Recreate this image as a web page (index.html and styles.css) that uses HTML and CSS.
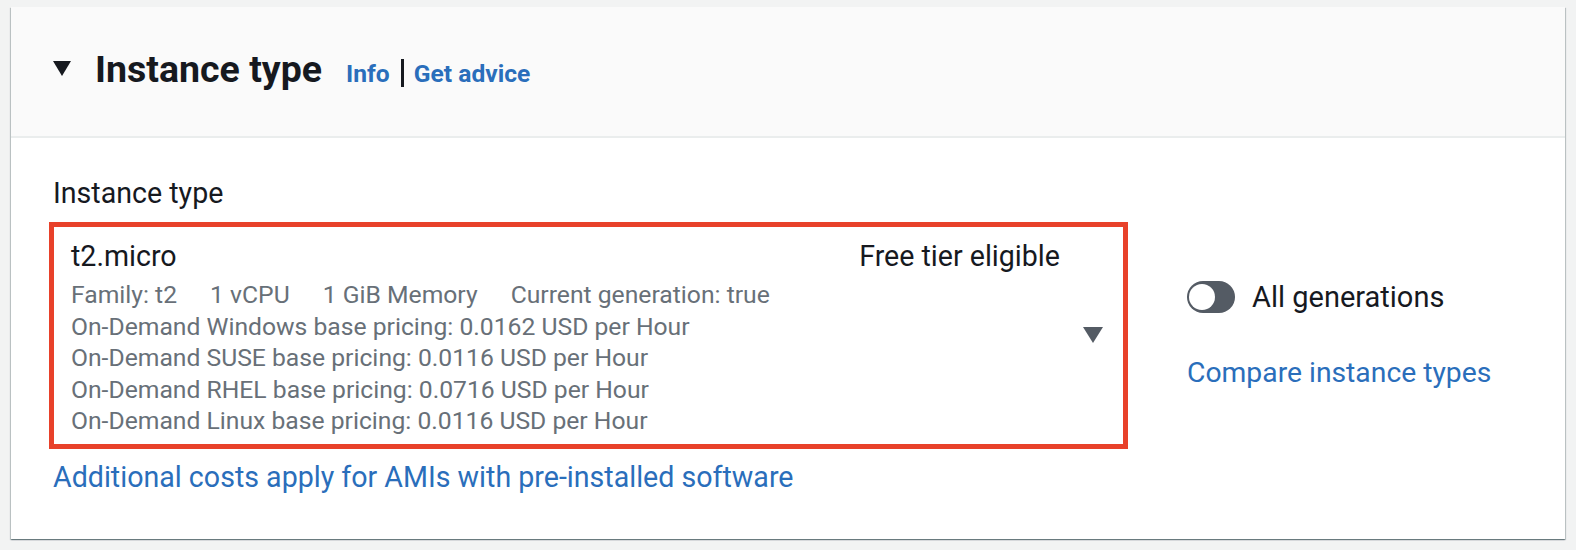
FILE: index.html
```html
<!DOCTYPE html>
<html lang="en">
<head>
<meta charset="utf-8">
<title>Instance type</title>
<link rel="stylesheet" href="styles.css">
</head>
<body>
<section class="card">
  <header class="card-header">
    <span class="caret-expand" aria-hidden="true"></span>
    <div class="heading">
      <h2 class="title">Instance type</h2>
      <a class="info-link" href="#">Info</a>
      <span class="sep" aria-hidden="true"></span>
      <a class="info-link" href="#">Get advice</a>
    </div>
  </header>
  <div class="card-body">
    <div class="select-col">
      <div class="field-label">Instance type</div>
      <div class="select">
        <div class="select-content">
          <div class="select-top">
            <span class="option-name">t2.micro</span>
            <span class="option-tag">Free tier eligible</span>
          </div>
          <div class="option-tags">
            <span>Family: t2</span>
            <span>1 vCPU</span>
            <span>1 GiB Memory</span>
            <span>Current generation: true</span>
          </div>
          <div class="option-desc">On-Demand Windows base pricing: 0.0162 USD per Hour</div>
          <div class="option-desc">On-Demand SUSE base pricing: 0.0116 USD per Hour</div>
          <div class="option-desc">On-Demand RHEL base pricing: 0.0716 USD per Hour</div>
          <div class="option-desc">On-Demand Linux base pricing: 0.0116 USD per Hour</div>
        </div>
        <div class="select-caret-wrap"><span class="select-caret"></span></div>
      </div>
      <a class="link constraint" href="#">Additional costs apply for AMIs with pre-installed software</a>
    </div>
    <div class="side-col">
      <div class="toggle-row">
        <span class="toggle"><span class="knob"></span></span>
        <span class="toggle-label">All generations</span>
      </div>
      <a class="link compare" href="#">Compare instance types</a>
    </div>
  </div>
</section>
</body>
</html>
```

FILE: styles.css
```css
* { box-sizing: border-box; }

html, body {
  margin: 0;
  padding: 0;
}

body {
  background: #f2f3f3;
  padding: 7px 11px 11px 11px;
  font-family: Roboto, "Noto Sans", Arial, sans-serif;
  color: #16191f;
}

.card {
  background: #ffffff;
  box-shadow: 0 1px 1px 0 rgba(0, 28, 36, 0.35), 1px 1px 1px 0 rgba(0, 28, 36, 0.18), -1px 1px 1px 0 rgba(0, 28, 36, 0.18);
}

.card-header {
  height: 131px;
  background: #fafafa;
  border-bottom: 2px solid #eaeded;
  display: flex;
  align-items: center;
  padding-left: 42px;
}

.caret-expand {
  width: 0;
  height: 0;
  border-left: 9px solid transparent;
  border-right: 9px solid transparent;
  border-top: 15px solid #16191f;
  margin-right: 24px;
  margin-bottom: 6px;
}

.heading {
  display: flex;
  align-items: baseline;
  margin-bottom: 5px;
}

.title {
  margin: 0;
  font-size: 37.5px;
  line-height: 44px;
  font-weight: 700;
  color: #16191f;
  margin-right: 24px;
}

.info-link {
  font-size: 24.6px;
  font-weight: 700;
  color: #2a6ebb;
  text-decoration: none;
}

.sep {
  align-self: center;
  width: 3px;
  height: 28px;
  background: #16191f;
  margin: 8px 10px 0 11px;
}

.card-body {
  display: grid;
  grid-template-columns: 1071px 1fr;
  column-gap: 63px;
  padding: 39px 42px 46px 42px;
}

.field-label {
  font-size: 28.6px;
  line-height: 32px;
  color: #16191f;
  margin-bottom: 13px;
}

.select {
  display: flex;
  margin: 0 -4px;
  border: 5px solid #e8412a;
  height: 227px;
  padding: 7px 0 0 17px;
}

.select-content {
  flex: 1;
}

.select-top {
  display: flex;
  justify-content: space-between;
  font-size: 28.6px;
  line-height: 45px;
  color: #16191f;
}

.option-tags {
  display: flex;
  gap: 33px;
}

.option-tags,
.option-desc {
  font-size: 24.7px;
  line-height: 31.5px;
  color: #687078;
}

.select-caret-wrap {
  width: 63px;
  display: flex;
  align-items: center;
  padding-left: 23px;
  padding-bottom: 8px;
}

.select-caret {
  width: 0;
  height: 0;
  border-left: 10px solid transparent;
  border-right: 10px solid transparent;
  border-top: 16px solid #545b64;
}

.link {
  display: block;
  font-size: 28.6px;
  line-height: 32px;
  color: #2a6ebb;
  text-decoration: none;
}

.constraint {
  margin-top: 12px;
}

.side-col {
  padding-top: 104px;
}

.toggle-row {
  display: flex;
  align-items: center;
  height: 32px;
}

.toggle {
  width: 48px;
  height: 32px;
  border-radius: 16px;
  background: #545b64;
  display: flex;
  align-items: center;
  padding-left: 2px;
  margin-right: 17px;
}

.knob {
  width: 26px;
  height: 26px;
  border-radius: 50%;
  background: #ffffff;
}

.toggle-label {
  font-size: 29px;
  line-height: 32px;
  color: #16191f;
}

.compare {
  margin-top: 44px;
  font-size: 28.3px;
}
```
